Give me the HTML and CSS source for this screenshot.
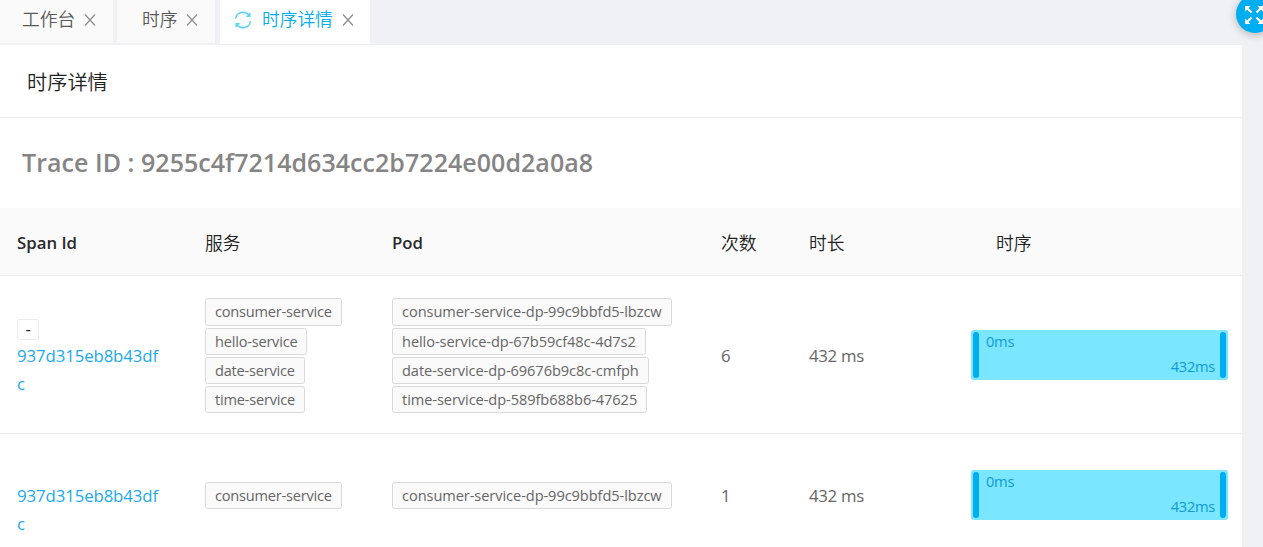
FILE: index.html
```html
<!DOCTYPE html>
<html lang="zh-CN">
<head>
<meta charset="utf-8">
<title>时序详情</title>
<link rel="stylesheet" href="styles.css">
</head>
<body>
<nav class="tabs">
  <div class="tab tab-home"><span class="name">工作台</span><svg class="close" viewBox="0 0 12 12"><path d="M1 .5 11 11.5M11 .5 1 11.5"/></svg></div>
  <div class="tab tab-seq"><span class="name">时序</span><svg class="close" viewBox="0 0 12 12"><path d="M1 .5 11 11.5M11 .5 1 11.5"/></svg></div>
  <div class="tab tab-active"><svg class="reload" viewBox="0 0 18 18"><path d="M1.5 8A7.5 7.5 0 0 1 15.2 4.6M16.5 10A7.5 7.5 0 0 1 2.8 13.4M15.8 1.8V5.2H12.4M2.2 16.2V12.8H5.6"/></svg><span class="name">时序详情</span><svg class="close" viewBox="0 0 12 12"><path d="M1 .5 11 11.5M11 .5 1 11.5"/></svg></div>
</nav>
<button class="expand" aria-label="全屏"><svg viewBox="0 0 20 20"><path class="line" d="M3 3 7.5 7.5M17 3 12.5 7.5M3 17 7.5 12.5M17 17 12.5 12.5"/><path class="head" d="M1 1H6.5L1 6.5ZM19 1H13.5L19 6.5ZM1 19H6.5L1 13.5ZM19 19H13.5L19 13.5Z"/></svg></button>
<main class="panel">
  <header class="title">时序详情</header>
  <h2 class="trace">Trace ID : 9255c4f7214d634cc2b7224e00d2a0a8</h2>
  <div class="row head">
    <div>Span Id</div><div class="cn">服务</div><div>Pod</div><div class="cn">次数</div><div class="cn">时长</div><div class="cn seq-title">时序</div>
  </div>
  <div class="row first">
    <div class="span-cell"><span class="toggle">-</span><a class="link">937d315eb8b43dfc</a></div>
    <div class="tags services"><span class="tag">consumer-service</span><span class="tag">hello-service</span><span class="tag">date-service</span><span class="tag">time-service</span></div>
    <div class="tags"><span class="tag">consumer-service-dp-99c9bbfd5-lbzcw</span><span class="tag">hello-service-dp-67b59cf48c-4d7s2</span><span class="tag">date-service-dp-69676b9c8c-cmfph</span><span class="tag">time-service-dp-589fb688b6-47625</span></div>
    <div class="num">6</div>
    <div class="num">432 ms</div>
    <div class="bar"><i class="cap"></i><span class="start">0ms</span><span class="end">432ms</span><i class="cap"></i></div>
  </div>
  <div class="row second">
    <div class="span-cell"><a class="link">937d315eb8b43dfc</a></div>
    <div class="tags services"><span class="tag">consumer-service</span></div>
    <div class="tags"><span class="tag">consumer-service-dp-99c9bbfd5-lbzcw</span></div>
    <div class="num">1</div>
    <div class="num">432 ms</div>
    <div class="bar"><i class="cap"></i><span class="start">0ms</span><span class="end">432ms</span><i class="cap"></i></div>
  </div>
</main>
</body>
</html>
```
FILE: styles.css
```css
* { box-sizing: border-box; }
body {
  margin: 0;
  height: 547px;
  overflow: hidden;
  position: relative;
  background: #eff1f5;
  color: #666;
  font: 400 16.8px/28px "Open Sans", "Noto Sans CJK SC", sans-serif;
}
.tabs { display: flex; height: 45px; width: 1242px; border-bottom: 1px solid #f0f0f0; }
.tab {
  display: flex;
  align-items: center;
  height: 43px;
  padding-bottom: 3px;
  background: #fafafa;
  border-right: 1px solid #f0f0f0;
  font-size: 17.7px;
  font-weight: 350;
  color: #595959;
}
.tab-home { width: 114px; padding-left: 22px; }
.tab-seq { width: 99px; margin-left: 3px; padding-left: 25px; }
.tab-active { width: 151px; height: 44px; margin-left: 4px; padding-left: 14px; padding-bottom: 4px; background: #fff; color: #00adf0; }
.name { flex: none; white-space: nowrap; margin-top: -2px; }
.close { width: 12px; height: 12px; margin-left: 9px; fill: none; stroke: #8c8c8c; stroke-width: 1.2; flex: none; }
.reload { width: 18px; height: 18px; margin-right: 10px; fill: none; stroke: #55d3fa; stroke-width: 1.4; flex: none; }
.expand {
  position: absolute;
  left: 1236px;
  top: -5px;
  width: 38px;
  height: 38px;
  padding: 10px 8px 8px;
  border: 0;
  border-radius: 50%;
  background: #00adf0;
  box-shadow: 0 2px 8px rgba(0, 0, 0, .25);
}
.expand svg { display: block; width: 20px; height: 20px; }
.expand .line { stroke: #fff; stroke-width: 2.2; }
.expand .head { fill: #fff; }
.panel { width: 1242px; height: 502px; background: #fff; overflow: hidden; }
.title { height: 73px; padding: 23px 27px 0; border-bottom: 1px solid #efefef; font-size: 20.2px; font-weight: 350; color: #222; }
.trace { height: 90px; margin: 0; padding: 29px 22px; font-size: 25px; font-weight: 600; line-height: 30px; letter-spacing: .04px; color: #858585; white-space: nowrap; }
.row {
  display: grid;
  grid-template-columns: 188px 187px 329px 88px 162px 257px;
  align-items: center;
  padding-left: 17px;
  border-bottom: 1px solid #ececec;
  letter-spacing: -.3px;
}
.row.head { height: 68px; padding-top: 2px; background: #fafafa; color: #2a2a2a; font-weight: 600; letter-spacing: 0; }
.row.head .cn { font-weight: 350; font-size: 17.8px; color: #222; }
.row.head .seq-title { padding-left: 25px; }
.row.first { height: 158px; }
.row.second { height: 122px; }
.num { padding-top: 2px; }
.span-cell { display: flex; flex-direction: column; align-items: flex-start; width: 146px; }
.first .span-cell { padding-top: 7px; }
.second .span-cell { padding-top: 30px; }
.toggle { width: 22px; height: 21px; margin: 1px 0 2px; border: 1px solid #ececec; border-radius: 2px; line-height: 17px; text-align: center; color: #222; }
.link { width: 146px; word-break: break-all; letter-spacing: -.1px; color: #1aa9ee; }
.tags { display: flex; flex-direction: column; align-items: flex-start; gap: 2.1px; padding-top: 2.8px; }
.tag { height: 27.2px; padding: 0 9px; border: 1px solid #d9d9d9; border-radius: 2.5px; background: #fafafa; font-size: 14.6px; line-height: 25px; letter-spacing: -.07px; white-space: nowrap; }
.services .tag { letter-spacing: -.22px; }
.bar { display: grid; grid-template-columns: 6px 1fr 1fr 6px; height: 50px; padding: 2px; border-radius: 3px; background: #7ae6ff; color: #109bd5; font-size: 14.7px; line-height: 20px; }
.cap { border-radius: 3px; background: #00adf0; }
.start { margin-top: -1px; padding-left: 7px; }
.end { padding: 0 5px 2px 0; align-self: end; text-align: right; }
```
